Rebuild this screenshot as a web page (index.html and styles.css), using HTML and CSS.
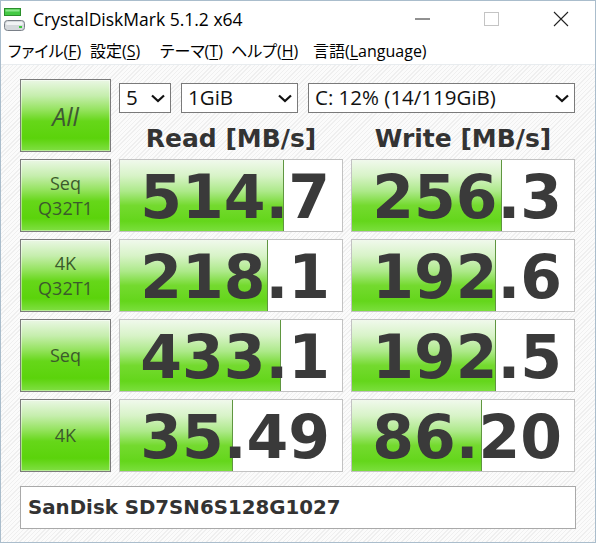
FILE: index.html
```html
<!DOCTYPE html>
<html lang="ja">
<head>
<meta charset="utf-8">
<title>CrystalDiskMark 5.1.2 x64</title>
<link rel="stylesheet" href="styles.css">
</head>
<body>
<div class="window">
  <div class="titlebar">
    <svg class="app-icon" width="22" height="24" viewBox="0 0 22 24">
      <rect x="0.5" y="1.5" width="16" height="7" fill="#44c944" stroke="#2b8f2b"/>
      <rect x="1.5" y="2.5" width="14" height="2" fill="#8de88d"/>
      <rect x="0.5" y="13.5" width="20" height="10" rx="3" fill="#d4d8dc" stroke="#7a8088"/>
      <rect x="2" y="15" width="17" height="3" rx="1.5" fill="#f1f3f5"/>
      <rect x="15" y="19" width="3" height="2" fill="#3cc83c"/>
    </svg>
    <span class="title">CrystalDiskMark 5.1.2 x64</span>
    <div class="controls">
      <svg class="ctl" width="16" height="16" viewBox="0 0 16 16"><line x1="0" y1="8" x2="15" y2="8" stroke="#222" stroke-width="1"/></svg>
      <svg class="ctl ctl-max" width="16" height="16" viewBox="0 0 16 16"><rect x="1.5" y="1.5" width="14" height="13" fill="none" stroke="#c4c4c4" stroke-width="1"/></svg>
      <svg class="ctl ctl-close" width="16" height="16" viewBox="0 0 16 16"><path d="M1 1 L15 15 M15 1 L1 15" stroke="#222" stroke-width="1.1" fill="none"/></svg>
    </div>
  </div>
  <div class="menubar">
    <span class="menu">ファイル(<u>F</u>)</span>
    <span class="menu">設定(<u>S</u>)</span>
    <span class="menu">テーマ(<u>T</u>)</span>
    <span class="menu">ヘルプ(<u>H</u>)</span>
    <span class="menu">言語(<u>L</u>anguage)</span>
  </div>
  <div class="content">
    <div class="grid">
      <div class="btn btn-all">All</div>
      <div class="top">
        <div class="selects">
          <div class="select s-count"><span>5</span><svg class="chev" width="14" height="9" viewBox="0 0 14 9"><polyline points="1,1.5 7,7 13,1.5" fill="none" stroke="#111" stroke-width="2.2"/></svg></div>
          <div class="select s-size"><span>1GiB</span><svg class="chev" width="14" height="9" viewBox="0 0 14 9"><polyline points="1,1.5 7,7 13,1.5" fill="none" stroke="#111" stroke-width="2.2"/></svg></div>
          <div class="select s-drive"><span>C: 12% (14/119GiB)</span><svg class="chev" width="14" height="9" viewBox="0 0 14 9"><polyline points="1,1.5 7,7 13,1.5" fill="none" stroke="#111" stroke-width="2.2"/></svg></div>
        </div>
        <div class="heads">
          <div class="head">Read [MB/s]</div>
          <div class="head">Write [MB/s]</div>
        </div>
      </div>

      <div class="btn">Seq<br>Q32T1</div>
      <div class="val" style="--fill:73.9%">514.7</div>
      <div class="val" style="--fill:67.6%">256.3</div>

      <div class="btn">4K<br>Q32T1</div>
      <div class="val" style="--fill:66.7%">218.1</div>
      <div class="val" style="--fill:64.9%">192.6</div>

      <div class="btn">Seq</div>
      <div class="val" style="--fill:72.5%">433.1</div>
      <div class="val" style="--fill:64.9%">192.5</div>

      <div class="btn">4K</div>
      <div class="val" style="--fill:50.9%">35.49</div>
      <div class="val" style="--fill:58.6%">86.20</div>
    </div>
    <div class="info">SanDisk SD7SN6S128G1027</div>
  </div>
</div>
</body>
</html>
```

FILE: styles.css
```css
* { box-sizing: border-box; }

html, body {
  margin: 0;
  padding: 0;
  background: #ffffff;
}

.window {
  width: 596px;
  height: 543px;
  border: 1px solid #aabdcc;
  background: #ffffff;
  display: flex;
  flex-direction: column;
  overflow: hidden;
  font-family: "Open Sans", "Noto Sans CJK JP", sans-serif;
  color: #000;
}

/* ---------- title bar ---------- */
.titlebar {
  height: 35px;
  flex: none;
  display: flex;
  align-items: center;
  padding-left: 3px;
  padding-right: 26px;
  background: #ffffff;
}

.app-icon {
  flex: none;
  margin-top: 1px;
}

.title {
  margin-left: 7px;
  font-size: 17.5px;
  color: #000;
  white-space: nowrap;
}

.controls {
  margin-left: auto;
  display: flex;
  align-items: center;
}

.ctl { display: block; flex: none; }
.ctl-max { margin-left: 52px; }
.ctl-close { margin-left: 54px; }

/* ---------- menu bar ---------- */
.menubar {
  height: 29px;
  flex: none;
  display: grid;
  grid-template-columns: 82px 70px 71px 82px auto;
  align-items: center;
  padding-left: 7px;
  border-bottom: 1px solid #e8ecef;
  font-family: "Open Sans", "Noto Sans CJK JP", sans-serif;
  font-feature-settings: "palt";
  font-size: 16px;
  white-space: nowrap;
}

.menu u {
  text-decoration: underline;
  text-underline-offset: 2px;
  text-decoration-thickness: 1px;
}

/* ---------- content ---------- */
.content {
  flex: 1;
  padding: 14px 19px 0 19px;
  background-color: #f7f7f7;
  background-image: repeating-linear-gradient(135deg, #fbfbfb 0 2px, #efefef 2px 3px);
}

.grid {
  display: grid;
  grid-template-columns: 91px 224px 224px;
  grid-auto-rows: 73px;
  column-gap: 8px;
  row-gap: 7px;
}

.btn {
  border: 1px solid #7b7b7b;
  box-shadow: inset 0 0 0 1px rgba(255, 255, 255, 0.45);
  background: linear-gradient(to bottom,
    #eaf7e4 0%,
    #c6eeae 22%,
    #95e35f 42%,
    #66d719 58%,
    #5bd30b 82%,
    #80df43 100%);
  display: flex;
  align-items: center;
  justify-content: center;
  text-align: center;
  font-family: "Open Sans", sans-serif;
  font-size: 18px;
  line-height: 25px;
  color: #3b5a2c;
}

.btn-all {
  font-size: 25px;
  font-style: italic;
  color: #3f5a33;
  padding-top: 2px;
}

.top {
  grid-column: 2 / 4;
  display: flex;
  flex-direction: column;
}

.selects {
  margin-top: 4px;
  height: 30px;
  display: flex;
  gap: 10px;
}

.select {
  height: 30px;
  border: 1px solid #7a7a7a;
  background: #ffffff;
  display: flex;
  align-items: center;
  justify-content: space-between;
  padding: 0 5px 0 6px;
  font-family: "Open Sans", sans-serif;
  font-size: 20.5px;
  color: #111;
  white-space: nowrap;
}

.select span { line-height: 1; margin-top: -1px; }

.s-count { width: 52px; }
.s-size { width: 117px; }
.s-drive { flex: 1; }

.chev { flex: none; display: block; }

.heads {
  flex: 1;
  display: grid;
  grid-template-columns: 1fr 1fr;
  column-gap: 8px;
  align-items: center;
}

.head {
  text-align: center;
  font-family: "DejaVu Sans", "Verdana", sans-serif;
  font-weight: bold;
  font-size: 25px;
  line-height: 1;
  color: #333333;
  padding-top: 11px;
}

.val {
  --fill: 0%;
  border: 1px solid #c2c2c2;
  background-color: #ffffff;
  background-image:
    linear-gradient(to right,
      transparent calc(var(--fill) - 1px),
      #5f9640 calc(var(--fill) - 1px),
      #5f9640 var(--fill),
      transparent var(--fill)),
    linear-gradient(to bottom,
      #f0f9ec 0%,
      #d8f3c8 22%,
      #ade98a 44%,
      #74da2f 64%,
      #64d61b 86%,
      #7adf3c 100%);
  background-size: 100% 100%, var(--fill) 100%;
  background-repeat: no-repeat;
  display: flex;
  align-items: center;
  justify-content: flex-end;
  padding: 3px 12px 0 0;
  font-family: "DejaVu Sans", "Verdana", sans-serif;
  font-weight: bold;
  font-size: 60px;
  line-height: 1;
  color: #3a3a3a;
}

.info {
  margin-top: 14px;
  height: 43px;
  border: 1px solid #a9a9a9;
  background: #ffffff;
  display: flex;
  align-items: center;
  padding-left: 7px;
  font-family: "DejaVu Sans", "Verdana", sans-serif;
  font-weight: bold;
  font-size: 19.8px;
  color: #333333;
}
```
